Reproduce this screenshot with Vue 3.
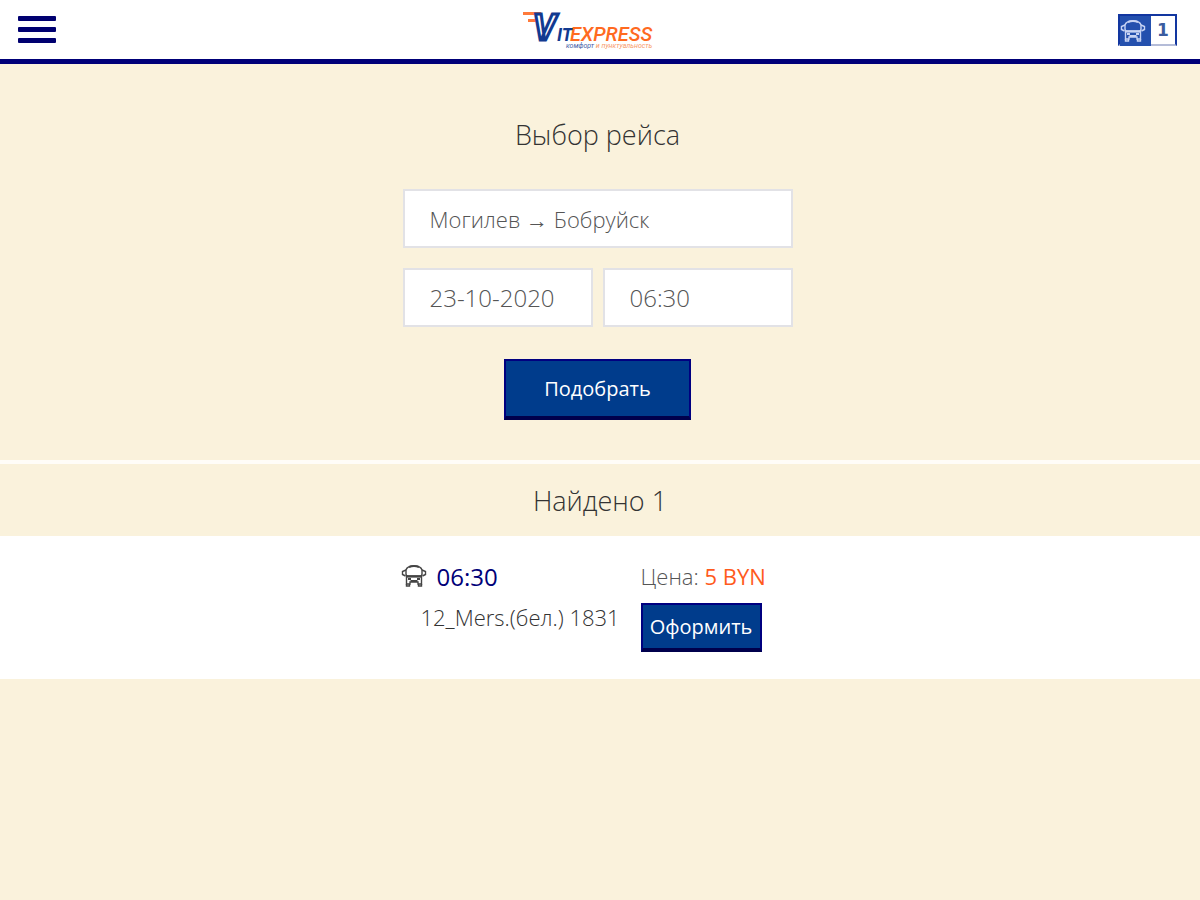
<script setup>
import { ref } from 'vue'

const route = ref('mogilev-bobruisk')
const date = ref('23-10-2020')
const time = ref('06:30')
const trips = [{ time: '06:30', bus: '12_Mers.(бел.) 1831', price: '5 BYN' }]
</script>

<template>
  <div class="page">
    <svg class="defs" aria-hidden="true">
      <symbol id="bus" viewBox="0 0 26 24">
        <path d="M5 6 Q6 2 13 2 Q20 2 21 6 V10 Q21 12 19 12 H7 Q5 12 5 10 Z" fill="none" stroke="currentColor" stroke-width="1.4" />
        <path d="M8 3 Q13 1 18 3" fill="none" stroke="currentColor" stroke-width="2" />
        <path d="M5 6 L1.5 7.5 V10.5 L4.5 12 M21 6 L24.5 7.5 V10.5 L21.5 12" fill="none" stroke="currentColor" stroke-width="1.4" />
        <path d="M5.5 12.5 H20.5 V20 H17 V18 H9 V20 H5.5 Z" fill="none" stroke="currentColor" stroke-width="1.4" />
        <path d="M7 15 H10 M16 15 H19 M9.5 17 H16.5 M6 12.5 H20" stroke="currentColor" stroke-width="2" />
        <path d="M5.5 20 V22 H8.5 V20 M17.5 20 V22 H20.5 V20" fill="none" stroke="currentColor" stroke-width="1.4" />
      </symbol>
    </svg>

    <header class="bar">
      <button class="menu" type="button" aria-label="Меню">
        <span></span><span></span><span></span>
      </button>
      <a class="logo" href="#" aria-label="Vitexpress">
        <svg width="132" height="56" viewBox="0 0 132 56">
          <path d="M1 11.5 H19 M6 18.5 H15" stroke="#ff7a3a" stroke-width="3" />
          <text class="logo-v" x="11" y="38" font-size="36">V</text>
          <text class="logo-it" x="35" y="39" font-size="18">IT</text>
          <text class="logo-ex" x="48" y="39" font-size="20">EXPRESS</text>
          <text class="logo-sub" x="44" y="46" font-size="7"><tspan fill="#4560a8">комфорт</tspan><tspan fill="#f79a68"> и пунктуальность</tspan></text>
        </svg>
      </a>
      <a class="cart" href="#" aria-label="Поездки: 1">
        <span class="cart-icon"><svg width="26" height="24"><use href="#bus" /></svg></span>
        <span class="cart-count">1</span>
      </a>
    </header>

    <main>
      <section class="search">
        <h1>Выбор рейса</h1>
        <form class="form" @submit.prevent>
          <select v-model="route" class="field" aria-label="Маршрут">
            <option value="mogilev-bobruisk">Могилев → Бобруйск</option>
          </select>
          <div class="pair">
            <input v-model="date" class="field" type="text" aria-label="Дата">
            <input v-model="time" class="field" type="text" aria-label="Время">
          </div>
          <button class="btn btn-main" type="submit">Подобрать</button>
        </form>
      </section>

      <h2 class="found">Найдено {{ trips.length }}</h2>

      <section class="results">
        <article v-for="trip in trips" :key="trip.time" class="trip">
          <div class="info">
            <div class="depart">
              <svg width="26" height="24" aria-hidden="true"><use href="#bus" /></svg>
              <span>{{ trip.time }}</span>
            </div>
            <div class="model">{{ trip.bus }}</div>
          </div>
          <div class="order">
            <div class="price">Цена: <span>{{ trip.price }}</span></div>
            <button class="btn btn-small" type="button">Оформить</button>
          </div>
        </article>
      </section>
    </main>
  </div>
</template>

<style>
body {
  margin: 0;
  background: #faf2dc;
}
</style>

<style scoped>
.page {
  font-family: "Open Sans", "Noto Sans", sans-serif;
  font-weight: 300;
  color: #333;
}
.page * {
  box-sizing: border-box;
}
.defs {
  position: absolute;
  width: 0;
  height: 0;
}
.bar {
  display: grid;
  grid-template-columns: 1fr auto 1fr;
  align-items: center;
  height: 64px;
  padding: 0 23px 0 18px;
  background: #fff;
  border-bottom: 5px solid #000078;
}
.menu {
  display: flex;
  flex-direction: column;
  gap: 6px;
  width: 38px;
  padding: 0;
  border: 0;
  background: none;
}
.menu span {
  width: 100%;
  height: 5px;
  border-radius: 1px;
  background: #000070;
}
.logo {
  display: block;
  margin-right: 20px;
}
.logo svg {
  display: block;
  overflow: visible;
}
.logo text {
  font-family: Roboto, "Liberation Sans", sans-serif;
  font-style: italic;
  font-weight: 700;
}
.logo .logo-v {
  fill: #fff;
  stroke: #123a90;
  stroke-width: 3;
}
.logo .logo-it {
  fill: #123a90;
}
.logo .logo-ex {
  fill: #ff6a1f;
  font-weight: 500;
}
.logo .logo-sub {
  font-weight: 400;
}
.cart {
  display: flex;
  justify-self: end;
  width: 59px;
  height: 32px;
  border: 2px solid #1236a0;
  border-bottom-color: #b4bcd8;
  background: #fff;
  color: #3a5ca0;
  text-decoration: none;
}
.cart-icon {
  display: flex;
  align-items: center;
  width: 31px;
  height: 30px;
  background: #2450ae;
  color: #c8d4f4;
}
.cart-count {
  flex: 1;
  font: 700 17px/29px "DejaVu Sans", sans-serif;
  text-align: center;
}
.search {
  display: flex;
  flex-direction: column;
  align-items: center;
  padding: 53px 5px 40px 0;
  border-bottom: 4px solid #fffdf8;
}
h1,
h2 {
  margin: 0;
  font-size: 27px;
  font-weight: 300;
  line-height: 36px;
  text-align: center;
}
.form {
  display: flex;
  flex-direction: column;
  align-items: center;
  gap: 20px;
  width: 100%;
  max-width: 390px;
  margin-top: 36px;
}
.field {
  width: 100%;
  min-width: 0;
  height: 59px;
  padding: 0 25px;
  border: 2px solid #e2e2e6;
  border-radius: 0;
  outline: 0;
  background: #fff;
  color: #555;
  font: inherit;
  font-size: 22px;
  appearance: none;
}
.pair {
  display: grid;
  grid-template-columns: 1fr 1fr;
  gap: 10px;
  width: 100%;
}
.pair .field {
  font-size: 24px;
}
.btn {
  border: 2px solid #000080;
  border-bottom: 4px solid #00004c;
  background: #003c8c;
  color: #fff;
  font: inherit;
  font-size: 20px;
  font-weight: 400;
}
.btn-main {
  width: 187px;
  height: 61px;
  margin-top: 12px;
}
.found {
  padding: 19px 0 17px;
}
.results {
  padding: 23px 5px 27px 0;
  background: #fff;
}
.trip {
  display: grid;
  grid-template-columns: 238px 1fr;
  width: 100%;
  max-width: 390px;
  margin: 0 auto;
}
.depart {
  display: flex;
  align-items: center;
  gap: 10px;
  height: 34px;
  color: #000078;
  font-size: 24px;
  font-weight: 400;
}
.depart svg {
  margin-left: -2px;
  color: #444;
}
.model {
  margin-top: 8px;
  padding-left: 18px;
  font-size: 22px;
  line-height: 32px;
  white-space: nowrap;
}
.price {
  color: #555;
  font-size: 22px;
  line-height: 34px;
}
.price span {
  color: #ff5a1c;
  font-weight: 400;
}
.btn-small {
  width: 121px;
  height: 49px;
  margin-top: 10px;
  padding: 0;
}
</style>
